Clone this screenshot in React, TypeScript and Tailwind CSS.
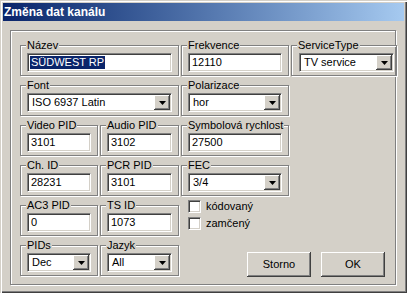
import type { ReactNode } from "react";

function Group({ label, className = "", inner = "px-[6px]", children }: { label: string; className?: string; inner?: string; children: ReactNode }) {
  return (
    <div className={`relative h-[37px] pt-[6px] ${className}`}>
      <div className={`h-[31px] border border-[#808080] pt-[7px] shadow-[inset_1px_1px_0_#fff,1px_1px_0_#fff] ${inner}`}>
        {children}
      </div>
      <span className="absolute left-[6px] top-0 bg-[#d4d0c8] px-[1px] text-[11px] leading-[12px]">{label}</span>
    </div>
  );
}

function Field({ value, selected = false, className = "w-full" }: { value: string; selected?: boolean; className?: string }) {
  return (
    <div className={`flex h-[19px] items-center border border-t-[#808080] border-l-[#808080] border-r-white border-b-white bg-white pl-[2px] text-[11px] shadow-[inset_1px_1px_0_#404040,inset_-1px_-1px_0_#d4d0c8] ${className}`}>
      {selected ? <span className="bg-[#0a246a] px-[1px] leading-[13px] text-white">{value}</span> : <span className="pl-[1px]">{value}</span>}
    </div>
  );
}

function Arrow() {
  return (
    <svg width="7" height="4" viewBox="0 0 7 4">
      <path d="M0 0h7L3.5 4z" fill="#000" />
    </svg>
  );
}

function Combo({ value, className = "w-full" }: { value: string; className?: string }) {
  return (
    <div className={`flex h-[19px] items-center border border-t-[#808080] border-l-[#808080] border-r-white border-b-white bg-white p-[1px] text-[11px] shadow-[inset_1px_1px_0_#404040,inset_-1px_-1px_0_#d4d0c8] ${className}`}>
      <span className="flex-1 pl-[3px]">{value}</span>
      <div className="flex h-[15px] w-[16px] items-center justify-center bg-[#d4d0c8] shadow-[inset_-1px_-1px_0_#404040,inset_1px_1px_0_#fff,inset_-2px_-2px_0_#808080]">
        <Arrow />
      </div>
    </div>
  );
}

function Check({ label }: { label: string }) {
  return (
    <div className="flex items-center gap-[5px] text-[11px] leading-[13px]">
      <div className="h-[13px] w-[13px] border border-t-[#808080] border-l-[#808080] border-r-white border-b-white bg-white shadow-[inset_1px_1px_0_#404040,inset_-1px_-1px_0_#d4d0c8]" />
      <span>{label}</span>
    </div>
  );
}

function Button({ label }: { label: string }) {
  return (
    <div className="flex h-[25px] w-[64px] items-center justify-center bg-[#d4d0c8] text-[11px] shadow-[inset_-1px_-1px_0_#404040,inset_1px_1px_0_#fff,inset_-2px_-2px_0_#808080]">
      {label}
    </div>
  );
}

export default function App() {
  return (
    <div className="h-[293px] w-[407px] overflow-hidden bg-[#d4d0c8] p-[3px] font-['Liberation_Sans',Arial,sans-serif] text-black shadow-[inset_1px_1px_0_#d4d0c8,inset_2px_2px_0_#fff,inset_-1px_-1px_0_#404040,inset_-2px_-2px_0_#808080]">
      <div className="flex h-[18px] items-center bg-linear-to-r from-[#0a246a] to-[#a6caf0] pl-[1px] text-[12px] font-bold text-white">
        Změna dat kanálu
      </div>

      <div className="ml-[7px] mt-[9px] h-[255px] w-[386px] border border-[#808080] shadow-[inset_1px_1px_0_#fff,1px_1px_0_#fff]">
        <div className="ml-[9px] mt-[8px] grid grid-cols-[78px_79px_108px_106px] gap-x-[2px] gap-y-[3px]">
          <Group label="Název" className="col-span-2">
            <Field value="SÜDWEST RP" selected />
          </Group>
          <Group label="Frekvence">
            <Field value="12110" />
          </Group>
          <Group label="ServiceType" inner="px-[7px]">
            <Combo value="TV service" className="w-[95px]" />
          </Group>

          <Group label="Font" className="col-span-2">
            <Combo value="ISO 6937 Latin" />
          </Group>
          <Group label="Polarizace">
            <Combo value="hor" />
          </Group>
          <div />

          <Group label="Video PID">
            <Field value="3101" />
          </Group>
          <Group label="Audio PID">
            <Field value="3102" />
          </Group>
          <Group label="Symbolová rychlost">
            <Field value="27500" />
          </Group>
          <div />

          <Group label="Ch. ID">
            <Field value="28231" />
          </Group>
          <Group label="PCR PID">
            <Field value="3101" />
          </Group>
          <Group label="FEC">
            <Combo value="3/4" />
          </Group>
          <div />

          <Group label="AC3 PID">
            <Field value="0" />
          </Group>
          <Group label="TS ID">
            <Field value="1073" />
          </Group>
          <div className="flex flex-col gap-[4px] pl-[7px] pt-[1px]">
            <Check label="kódovaný" />
            <Check label="zamčený" />
          </div>
          <div />

          <Group label="PIDs">
            <Combo value="Dec" />
          </Group>
          <Group label="Jazyk">
            <Combo value="All" />
          </Group>
          <div className="col-span-2 flex justify-end gap-[10px] pr-[12px] pt-[13px]">
            <Button label="Storno" />
            <Button label="OK" />
          </div>
        </div>
      </div>
    </div>
  );
}
